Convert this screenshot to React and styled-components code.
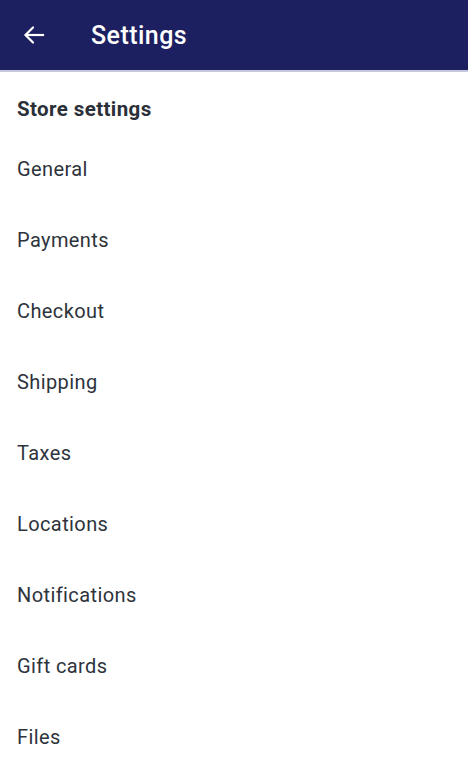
import React from "react";
import styled, { createGlobalStyle } from "styled-components";

const Global = createGlobalStyle`
  body {
    margin: 0;
    background: #fff;
    font-family: Roboto, "Liberation Sans", sans-serif;
  }
`;

const Page = styled.div`
  width: 468px;
  min-height: 771px;
  background: #fff;
`;

const Header = styled.header`
  height: 70px;
  background: #1c2060;
  border-bottom: 2px solid #c5c8dc;
  display: flex;
  align-items: center;
  padding: 0 20px;
  gap: 44px;
  color: #fff;
`;

const BackButton = styled.button`
  background: none;
  border: 0;
  padding: 0;
  width: 27px;
  height: 27px;
  display: flex;
  align-items: center;
  justify-content: center;
  color: #fff;
  cursor: pointer;
`;

const Title = styled.h1`
  margin: 0;
  font-size: 25px;
  font-weight: 500;
  letter-spacing: 0.45px;
`;

const SectionTitle = styled.h2`
  margin: 0;
  padding: 25px 17px 12px;
  font-size: 20.5px;
  line-height: 24px;
  font-weight: 700;
  letter-spacing: 0.4px;
  color: #2b2f38;
`;

const List = styled.ul`
  list-style: none;
  margin: 0;
  padding: 0;
`;

const Item = styled.li`
  height: 71px;
  display: flex;
  align-items: center;
  padding: 0 17px;
  font-size: 20px;
  letter-spacing: 0.4px;
  color: #2e333c;
`;

const items = [
  "General",
  "Payments",
  "Checkout",
  "Shipping",
  "Taxes",
  "Locations",
  "Notifications",
  "Gift cards",
  "Files",
];

export default function App() {
  return (
    <Page>
      <Global />
      <Header>
        <BackButton aria-label="Back">
          <svg width="24" height="24" viewBox="0 0 24 24" fill="none" stroke="currentColor" strokeWidth="2.2" strokeLinecap="square">
            <path d="M21 12H4" />
            <path d="M11 4.5L3.5 12L11 19.5" strokeLinecap="round" strokeLinejoin="miter" />
          </svg>
        </BackButton>
        <Title>Settings</Title>
      </Header>
      <SectionTitle>Store settings</SectionTitle>
      <List>
        {items.map((label) => (
          <Item key={label}>{label}</Item>
        ))}
      </List>
    </Page>
  );
}
